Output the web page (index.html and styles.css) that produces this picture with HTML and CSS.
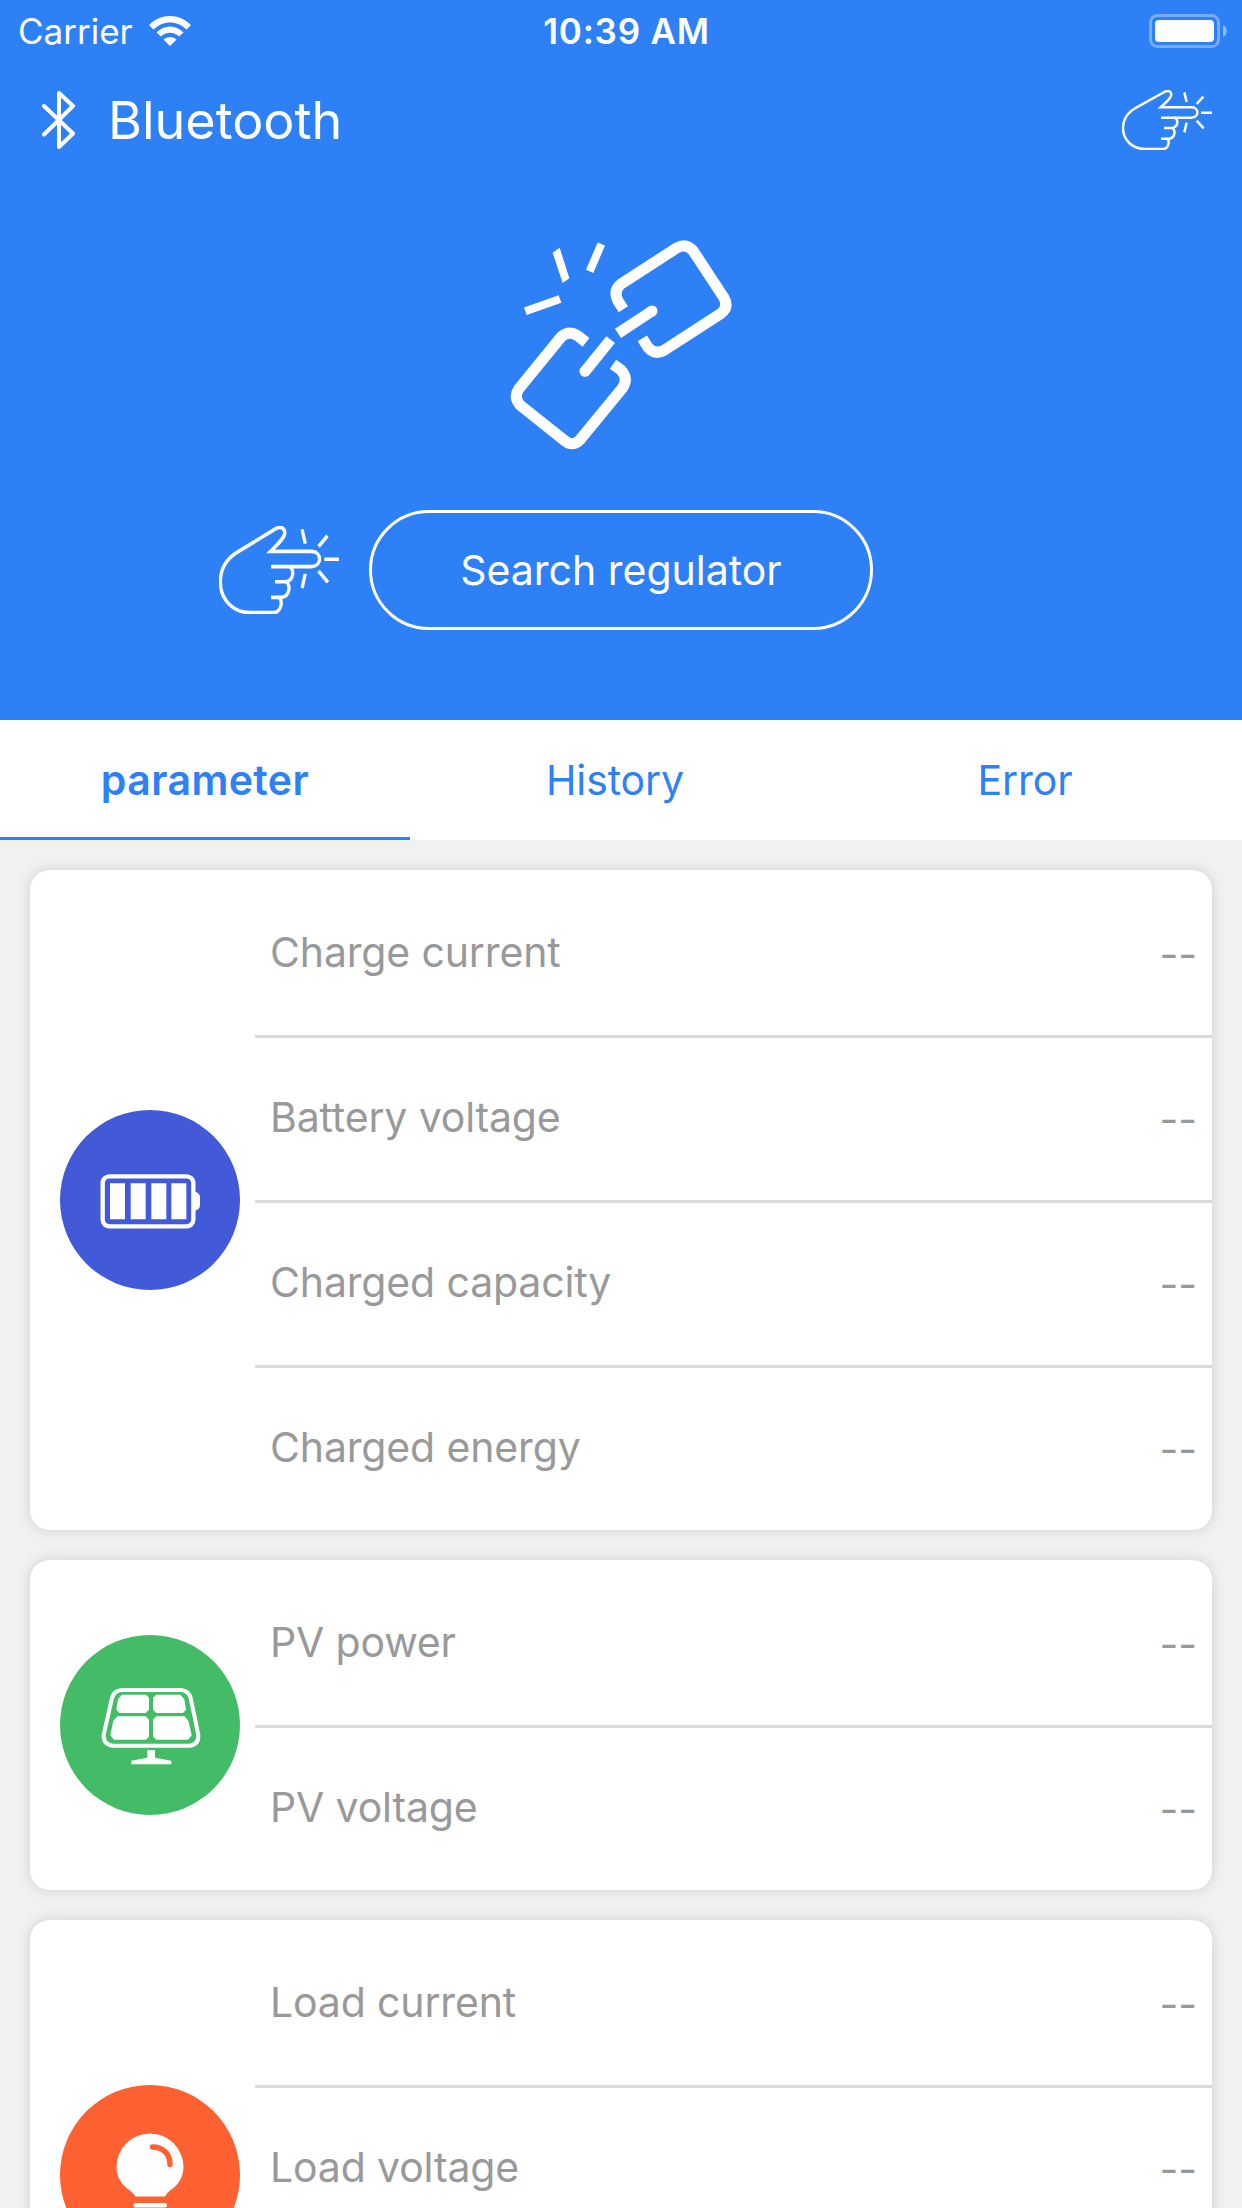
FILE: index.html
```html
<!DOCTYPE html>
<html lang="en">
<head>
    <meta charset="UTF-8">
    <meta name="viewport" content="width=device-width, initial-scale=1.0">
    <title>Bluetooth</title>
    <link rel="stylesheet" href="styles.css">
</head>
<body>
    <svg class="defs" width="0" height="0">
        <symbol id="hand" viewBox="66 60 270 180" preserveAspectRatio="none">
            <g fill="none" stroke="#fff" stroke-width="7.500">
                <path d="M225 143H275C298 142 298 113 275 112H182C200 96 216 82 214 72C212 62 202 61 193 66L110 112C82 127 69 148 69 174C69 210 97 237 135 237H190C205 236 211 214 201 206"/>
                <path d="M183 143H225C236 150 234 171 217 174H192M217 174C228 182 225 204 207 206H183"/>
                <path d="M253 67L260 96M310 80L290 102M303 128H336M290 152L311 175M260 158L253 187"/>
            </g>
        </symbol>
    </svg>

    <header class="header">
        <div class="status-bar">
            <div class="carrier">
                <span>Carrier</span>
                <svg class="wifi" viewBox="0 0 42 30">
                    <path fill="#fff" d="M0 9C12-3 30-3 42 9L37.500 13.500C28 4 14 4 4.500 13.500ZM7.500 16.500C15 8.500 27 8.500 34.500 16.500L30 20.500C25 15.500 17 15.500 12 20.500ZM14.500 23.500C18 20 24 20 27.500 23.500L21 30Z"/>
                </svg>
            </div>
            <div class="time">10:39 AM</div>
            <svg class="battery" viewBox="0 0 78 34">
                <rect x="1.500" y="1.500" width="68" height="31" rx="7" fill="none" stroke="#fff" stroke-opacity=".35" stroke-width="3"/>
                <rect x="6" y="6" width="59" height="22" rx="4" fill="#fff"/>
                <path d="M74 11C79 13 79 21 74 23Z" fill="#fff" fill-opacity=".45"/>
            </svg>
        </div>

        <div class="nav-bar">
            <svg class="bt-icon" viewBox="0 0 34 58">
                <path d="M2 15L31 42.500L17 56V2L31 15L2 43.500" fill="none" stroke="#fff" stroke-width="4" stroke-linecap="round" stroke-linejoin="round"/>
            </svg>
            <h1>Bluetooth</h1>
            <svg class="hand-small"><use href="#hand"/></svg>
        </div>

        <svg class="link-icon" viewBox="0 0 780 750">
            <g fill="none" stroke="#fff" stroke-width="33">
                <path d="M400 268L384 243Q368 210 396 190L560 84Q588 68 609 92L701 232Q718 262 692 281L522 391Q495 406 474 382L457 355"/>
                <path d="M288 367L264 348Q238 330 214 350L86 507Q70 532 90 555L224 662Q248 682 271 658L398 503Q416 475 393 450L369 433"/>
                <path d="M384 340L486 273M362 359L286 453"/>
            </g>
            <g fill="none" stroke="#fff" stroke-width="24">
                <path d="M106 274L210 237M334 72L299 154"/>
            </g>
            <path d="M188 98L209 83L238 175L218 189Z" fill="#fff"/>
            <circle cx="486" cy="273" r="16.500" fill="#fff"/>
            <circle cx="285" cy="454" r="16.500" fill="#fff"/>
        </svg>

        <div class="search-row">
            <svg class="hand-big"><use href="#hand"/></svg>
            <button class="search-btn">Search regulator</button>
        </div>
    </header>

    <nav class="tabs">
        <a class="tab active"><span>parameter</span></a>
        <a class="tab">History</a>
        <a class="tab">Error</a>
    </nav>

    <main class="list">
        <section class="card">
            <svg class="card-icon" viewBox="60 60 540 540">
                <circle cx="330" cy="330" r="270" fill="#4259d8"/>
                <rect x="188" y="259" width="272" height="150" rx="20" fill="none" stroke="#fff" stroke-width="13"/>
                <path d="M210 280H255V388H210ZM272 280H317V388H272ZM334 280H379V388H334ZM394 280H439V388H394Z" fill="#fff"/>
                <path d="M464 305Q480 308 480 322V345Q480 359 464 362Z" fill="#fff"/>
            </svg>
            <div class="rows">
                <div class="row"><span>Charge current</span><span class="value">--</span></div>
                <div class="row"><span>Battery voltage</span><span class="value">--</span></div>
                <div class="row"><span>Charged capacity</span><span class="value">--</span></div>
                <div class="row"><span>Charged energy</span><span class="value">--</span></div>
            </div>
        </section>

        <section class="card">
            <svg class="card-icon" viewBox="60 75 540 540">
                <circle cx="330" cy="345" r="270" fill="#44bb67"/>
                <path d="M245 240H423Q446 242 452 264L475 374Q477 404 449 407H218Q189 404 191 374L216 264Q222 242 245 240Z" fill="none" stroke="#fff" stroke-width="12"/>
                <path d="M246 254H318L327 263V299L317 309H238L229 299L234 268ZM349 254H421L433 268L438 299L429 309H349L339 299V263ZM232 319H317L327 329V380L318 389H222L211 376L220 332ZM349 319H433L445 332L455 376L444 389H349L339 380V329Z" fill="#fff"/>
                <path d="M322 421H345V443L394 452V463H274V452L322 443Z" fill="#fff"/>
            </svg>
            <div class="rows">
                <div class="row"><span>PV power</span><span class="value">--</span></div>
                <div class="row"><span>PV voltage</span><span class="value">--</span></div>
            </div>
        </section>

        <section class="card load">
            <svg class="card-icon" viewBox="0 0 180 180">
                <circle cx="90" cy="90" r="90" fill="#fd6031"/>
                <path d="M75.500 111.500Q74 109 70 105.500C61 100 56.500 91 56.500 82A33.500 33.500 0 0 1 123.500 82C123.500 91 119 100 110 105.500Q106 109 105 111.500Z" fill="#fff"/>
                <path d="M92.500 62C103 62 110 69 110 79.500" fill="none" stroke="#fd6031" stroke-width="5.500" stroke-linecap="round"/>
                <rect x="73.500" y="118" width="33.500" height="4.500" rx="2" fill="#fff"/>
            </svg>
            <div class="rows">
                <div class="row"><span>Load current</span><span class="value">--</span></div>
                <div class="row"><span>Load voltage</span><span class="value">--</span></div>
            </div>
        </section>
    </main>
</body>
</html>
```

FILE: styles.css
```css
* {
    box-sizing: border-box;
}
body {
    margin: 0;
    height: 2208px;
    overflow: hidden;
    font-family: Inter, "Liberation Sans", sans-serif;
    font-size: 41px;
    background-color: #f1f1f1;
}
svg {
    display: block;
    flex-shrink: 0;
}
.defs {
    position: absolute;
}

/* Header */
.header {
    height: 720px;
    background-color: #2e80f7;
    color: #fff;
}
.status-bar {
    display: grid;
    grid-template-columns: 1fr auto 1fr;
    height: 60px;
    padding: 0 15px 0 18px;
    align-items: center;
    font-size: 35px;
    line-height: 62px;
}
.carrier {
    display: flex;
    align-items: center;
    gap: 16px;
}
.wifi {
    width: 42px;
    height: 30px;
}
.time {
    padding-left: 8px;
    font-weight: 600;
    letter-spacing: 0.8px;
}
.battery {
    width: 78px;
    height: 34px;
    justify-self: end;
}
.nav-bar {
    display: flex;
    align-items: center;
    height: 120px;
    padding: 0 30px 0 42px;
}
.bt-icon {
    width: 34px;
    height: 58px;
}
.nav-bar h1 {
    flex: 1;
    margin: 0 0 0 32px;
    font-size: 52px;
    font-weight: 400;
}
.hand-small {
    width: 90px;
    height: 60px;
}
.link-icon {
    width: 260px;
    height: 250px;
    margin: 40px auto 0 490px;
}
.search-row {
    display: flex;
    align-items: center;
    gap: 30px;
    margin-top: 40px;
    padding-left: 219px;
}
.hand-big {
    width: 120px;
    height: 88px;
}
.search-btn {
    width: 504px;
    height: 120px;
    border: 3px solid #fff;
    border-radius: 60px;
    background: none;
    color: #fff;
    font: inherit;
}

/* Tabs */
.tabs {
    display: flex;
    height: 120px;
    background-color: #fff;
    color: #2e80f7;
}
.tab {
    width: 410px;
    line-height: 120px;
    text-align: center;
    letter-spacing: -0.1px;
}
.tab.active {
    font-weight: 600;
    letter-spacing: 0.4px;
    border-bottom: 3px solid #2e80f7;
}

/* Cards */
.list {
    display: flex;
    flex-direction: column;
    gap: 30px;
    padding: 30px;
}
.card {
    display: flex;
    align-items: center;
    padding-left: 30px;
    background-color: #fff;
    border-radius: 20px;
    box-shadow: 0 0 14px rgba(0, 0, 0, 0.14);
}
.card-icon {
    width: 180px;
    height: 180px;
    margin-right: 15px;
}
.load {
    height: 510px;
}
.load .rows {
    align-self: flex-start;
}
.rows {
    flex: 1;
}
.row {
    display: flex;
    justify-content: space-between;
    height: 165px;
    padding: 0 15px;
    line-height: 165px;
    letter-spacing: -0.15px;
    color: #999;
}
.row + .row {
    box-shadow: inset 0 3px #d9d9d9;
}
.value {
    line-height: 168px;
}
```
